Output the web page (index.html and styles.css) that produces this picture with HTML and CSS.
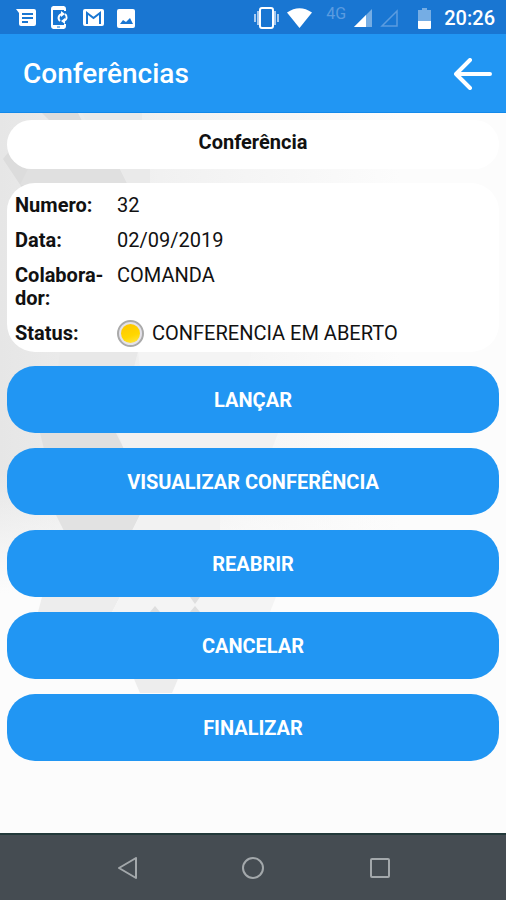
FILE: index.html
```html
<!DOCTYPE html>
<html lang="pt-BR">
<head>
<meta charset="UTF-8">
<meta name="viewport" content="width=device-width, initial-scale=1.0">
<title>Conferências</title>
<link rel="stylesheet" href="styles.css">
</head>
<body>
<div class="status-bar">
  <div class="status-left">
    <svg width="21" height="18" viewBox="0 0 21 18"><path fill="#fff" d="M0 0h18a2 2 0 0 1 2 2v13a2 2 0 0 1-2 2H5a2 2 0 0 1-2-2V4z"/><path stroke="#1976d2" stroke-width="2" d="M6 5h11M6 9h11M6 13h6"/></svg>
    <svg width="20" height="24" viewBox="0 0 20 24"><path fill="none" stroke="#fff" stroke-width="2" d="M15 5V3a2 2 0 0 0-2-2H4a2 2 0 0 0-2 2v17a2 2 0 0 0 2 2h9a2 2 0 0 0 2-2v-2"/><path fill="#fff" d="M3 0h11v4H3zM3 19h11v4H3z"/><path stroke="#1976d2" d="M7 21h3"/><path fill="none" stroke="#fff" stroke-width="2" d="M10 15a4 4 0 0 1 2-7M15 8a4 4 0 0 1-1 7"/><path fill="#fff" d="M11 5l4 3-4 3zM15 12v6l-4-3z"/></svg>
    <svg width="21" height="18" viewBox="0 0 21 18"><rect width="21" height="17" rx="2" fill="#fff"/><path fill="none" stroke="#1976d2" stroke-width="2" d="M4 15V4l6.500 5L17 4v11"/></svg>
    <svg width="18" height="19" viewBox="0 0 18 19"><rect width="18" height="19" rx="2" fill="#fff"/><path fill="#1976d2" d="M3 15l3-4 3 2 4-4 3 6z"/></svg>
  </div>
  <div class="status-right">
    <svg width="25" height="22" viewBox="0 0 25 22"><path stroke="#a9cbf0" stroke-width="2" d="M4 4v14M1 7v8M21 4v14M24 7v8"/><rect x="6" y="1" width="13" height="20" rx="2" fill="none" stroke="#fff" stroke-width="2"/></svg>
    <svg width="25" height="20" viewBox="0 0 25 20"><path fill="#fff" d="M0 4.500Q12.500-4 25 4.500L12.500 20z"/></svg>
    <span class="network">4G</span>
    <svg width="18" height="18" viewBox="0 0 18 18"><path fill="#75ade4" d="M18 0v18H0z"/><path fill="#fff" d="M12 6v12H0z"/></svg>
    <svg width="18" height="18" viewBox="0 0 18 18"><path fill="none" stroke="#5b9ce0" stroke-width="1.500" d="M17 2v15H2z"/></svg>
    <svg class="battery" width="13" height="21" viewBox="0 0 13 21"><path fill="#75ade4" d="M4 0h5v2h4v12H0V2h4z"/><path fill="#fff" d="M0 13h13v7a1 1 0 0 1-1 1H1a1 1 0 0 1-1-1z"/></svg>
    <span class="clock">20:26</span>
  </div>
</div>

<header class="header">
  <h1>Conferências</h1>
  <button class="back" aria-label="Voltar">
    <svg width="38" height="32" viewBox="0 0 38 32"><path fill="none" stroke="#fff" stroke-width="4" stroke-linecap="round" stroke-linejoin="round" d="M16 2L2 16l14 14M2 16h34"/></svg>
  </button>
</header>

<main class="content">
  <!-- faded polygons behind the cards -->
  <svg class="pattern" width="400" height="600" viewBox="0 0 400 600">
    <defs>
      <linearGradient id="fade"><stop offset="0" stop-color="#e6e6e6"/><stop offset="0.400" stop-color="#f1f1f1"/><stop offset="1" stop-color="#fcfcfc"/></linearGradient>
      <linearGradient id="fadeDown" x2="0" y2="1"><stop offset="0" stop-color="#fcfcfc" stop-opacity="0"/><stop offset="1" stop-color="#fcfcfc"/></linearGradient>
    </defs>
    <path fill="url(#fade)" d="M0 0h400v480H0z"/>
    <path fill="#dcdcdc" d="M42 0h36l4 8H50zM3 46l8-10 24 22-12 18-20-30z"/>
    <path fill="#e0e0e0" d="M28 56h92l8 16H20z"/>
    <path fill="#eaeaea" d="M82 0h60v8H86zM120 56h30v16h-22z"/>
    <path fill="#e8e8e8" d="M60 238h78l-4 16H58z"/>
    <path fill="#f4f4f4" d="M138 238h114l-4 16H140z"/>
    <path fill="#dfdfdf" d="M40 320h76l8 16H44z"/>
    <path fill="#f1f1f1" d="M118 320h160l-6 16H124z"/>
    <path fill="url(#fadeDown)" d="M0 360h400v120H0z"/>
    <path fill="#e2e2e2" d="M56 402h84l-8 16H64z"/>
    <path fill="#f2f2f2" d="M140 402h80v16h-88z"/>
    <path fill="#ededed" d="M42 484h78l-8 15H38zM134 566h44l-6 14h-32z"/>
    <path fill="#f4f4f4" d="M120 484h156l-6 15H112z"/>
    <path fill="#dedede" d="M150 499l5-6 5 6zM190 484h10l-5 7zM190 499l5-6 5 6z"/>
  </svg>

  <h2 class="card card-title">Conferência</h2>

  <dl class="card details">
    <dt>Numero:</dt><dd>32</dd>
    <dt>Data:</dt><dd>02/09/2019</dd>
    <dt>Colabora-<br>dor:</dt><dd>COMANDA</dd>
    <dt>Status:</dt><dd class="status"><span class="dot"></span>CONFERENCIA EM ABERTO</dd>
  </dl>

  <div class="button-container">
    <button class="button">LANÇAR</button>
    <button class="button">VISUALIZAR CONFERÊNCIA</button>
    <button class="button">REABRIR</button>
    <button class="button">CANCELAR</button>
    <button class="button">FINALIZAR</button>
  </div>
</main>

<nav class="nav-bar">
  <button aria-label="Voltar"><svg width="22" height="22" viewBox="0 0 22 22"><path d="M20 1v20L3 11z"/></svg></button>
  <button aria-label="Início"><svg width="22" height="22" viewBox="0 0 22 22"><circle cx="11" cy="11" r="10"/></svg></button>
  <button aria-label="Recentes"><svg width="22" height="22" viewBox="0 0 22 22"><rect x="2" y="2" width="18" height="18" rx="1"/></svg></button>
</nav>
</body>
</html>
```
FILE: styles.css
```css
* {
  box-sizing: border-box;
}

body {
  display: flex;
  flex-direction: column;
  min-height: 100vh;
  margin: 0;
  background-color: #fcfcfc;
  color: #111;
  font-family: Roboto, "Liberation Sans", sans-serif;
  font-size: 20px;
  line-height: 23px;
}

button {
  border: none;
  padding: 0;
  background: none;
  font-family: inherit;
  cursor: pointer;
}

svg {
  display: block;
}

.status-bar {
  display: flex;
  justify-content: space-between;
  height: 34px;
  padding: 2px 11px 0 16px;
  background-color: #1976d2;
  color: white;
}

.status-left,
.status-right {
  display: flex;
  align-items: center;
}

.status-left {
  gap: 13px;
}

.status-right {
  gap: 8px;
}

.network {
  align-self: flex-start;
  margin-left: 6px;
  color: #5b9ce0;
  font-size: 16px;
}

.battery {
  margin: 0 5px 0 12px;
}

.clock {
  font-weight: 500;
}

.header {
  display: flex;
  justify-content: space-between;
  align-items: center;
  height: 79px;
  padding: 2px 14px 0 23px;
  background-color: #2196f3;
  border-bottom: 1px solid #1289ea;
  color: white;
}

.header h1 {
  margin: 0;
  font-size: 28px;
  font-weight: 500;
  line-height: 32px;
}

.content {
  position: relative;
  flex: 1;
  display: flex;
  flex-direction: column;
  gap: 14px;
  padding: 7px;
}

.pattern {
  position: absolute;
  top: 0;
  left: 0;
  z-index: -1;
}

.card {
  margin: 0;
  border-radius: 28px;
  background-color: white;
}

.card-title {
  padding: 11px 0 15px;
  font-size: 20px;
  font-weight: 700;
  text-align: center;
}

.details {
  display: grid;
  grid-template-columns: 90px 1fr;
  gap: 12px;
  padding: 11px 8px 7px;
}

.details dt {
  font-weight: 700;
}

.details dd {
  margin: 0;
}

.details .status {
  display: flex;
  align-items: center;
  gap: 8px;
}

.dot {
  width: 27px;
  height: 27px;
  margin: -2px 0;
  border: 2px solid #aaa;
  border-radius: 50%;
  background: linear-gradient(160deg, #ffc400, #ffd700 60%, #ffe54a) content-box, #e4e2ea;
  padding: 2px;
}

.button-container {
  display: flex;
  flex-direction: column;
  gap: 15px;
}

.button {
  height: 67px;
  border-radius: 28px;
  background-color: #2196f3;
  color: white;
  font-size: 20px;
  font-weight: 700;
}

.nav-bar {
  display: flex;
  justify-content: space-around;
  align-items: center;
  height: 67px;
  padding: 0 12.5%;
  border-top: 2px solid #22393a;
  background-color: #454c52;
}

.nav-bar svg {
  fill: none;
  stroke: #a3a8ab;
  stroke-width: 2;
  stroke-linejoin: round;
}
```
